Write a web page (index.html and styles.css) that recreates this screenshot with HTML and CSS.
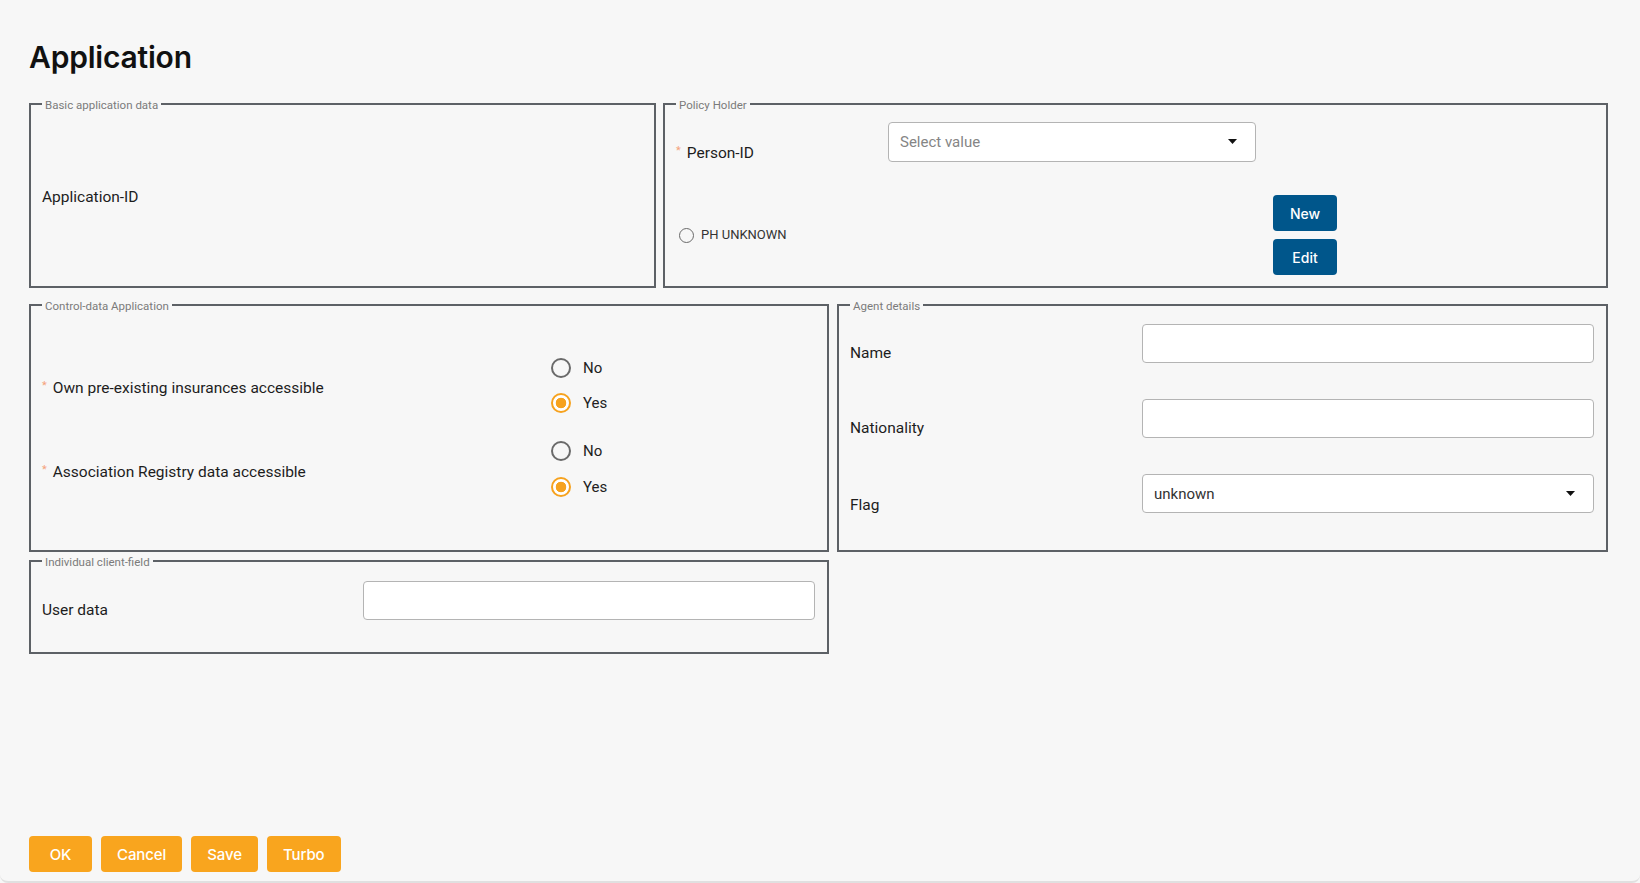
FILE: index.html
```html
<!doctype html>
<html lang="en">
<head>
    <meta charset="UTF-8">
    <meta name="viewport" content="width=device-width, initial-scale=1.0">
    <title>Application</title>
    <link rel="stylesheet" href="styles.css">
</head>
<body>
<div class="page">
    <h1 class="title">Application</h1>

    <div class="row-top">
        <fieldset class="group">
            <legend>Basic application data</legend>
            <div class="center-box">
                <span class="field-label">Application-ID</span>
            </div>
        </fieldset>

        <fieldset class="group group-holder">
            <legend>Policy Holder</legend>
            <div class="field">
                <label class="field-label req holder-label" for="personId">Person-ID</label>
                <div class="select select-short">
                    <select id="personId" class="placeholder">
                        <option>Select value</option>
                    </select>
                    <svg class="caret" width="9" height="5" viewBox="0 0 9 5"><path d="M0 0h9L4.5 5z" fill="#111"/></svg>
                </div>
            </div>
            <div class="holder-row">
                <label class="radio radio-small"><input type="radio" name="ph"> PH UNKNOWN</label>
                <div class="btn-stack">
                    <button class="btn btn-blue">New</button>
                    <button class="btn btn-blue">Edit</button>
                </div>
            </div>
        </fieldset>
    </div>

    <div class="row-main">
        <fieldset class="group group-control">
            <legend>Control-data Application</legend>
            <div class="choice-list">
                <div class="choice">
                    <span class="field-label req choice-label">Own pre-existing insurances accessible</span>
                    <div class="radio-group">
                        <label class="radio"><input type="radio" name="own"> No</label>
                        <label class="radio"><input type="radio" name="own" checked> Yes</label>
                    </div>
                </div>
                <div class="choice">
                    <span class="field-label req choice-label">Association Registry data accessible</span>
                    <div class="radio-group">
                        <label class="radio"><input type="radio" name="assoc"> No</label>
                        <label class="radio"><input type="radio" name="assoc" checked> Yes</label>
                    </div>
                </div>
            </div>
        </fieldset>

        <fieldset class="group group-agent">
            <legend>Agent details</legend>
            <div class="field">
                <label class="field-label agent-label" for="agentName">Name</label>
                <input type="text" id="agentName" class="text-input">
            </div>
            <div class="field">
                <label class="field-label agent-label" for="agentNat">Nationality</label>
                <input type="text" id="agentNat" class="text-input">
            </div>
            <div class="field">
                <label class="field-label agent-label flag-label" for="agentFlag">Flag</label>
                <div class="select select-wide">
                    <select id="agentFlag">
                        <option>unknown</option>
                    </select>
                    <svg class="caret" width="9" height="5" viewBox="0 0 9 5"><path d="M0 0h9L4.5 5z" fill="#111"/></svg>
                </div>
            </div>
        </fieldset>

        <fieldset class="group group-client">
            <legend>Individual client-field</legend>
            <div class="field">
                <label class="field-label client-label" for="userData">User data</label>
                <input type="text" id="userData" class="text-input">
            </div>
        </fieldset>
    </div>

    <div class="actions">
        <button class="btn btn-orange">OK</button>
        <button class="btn btn-orange">Cancel</button>
        <button class="btn btn-orange">Save</button>
        <button class="btn btn-orange">Turbo</button>
    </div>
</div>
</body>
</html>
```
FILE: styles.css
```css
*{
    box-sizing: border-box;
}
body{
    margin: 0;
    background: #f7f7f7;
    font-family: Roboto, "Liberation Sans", sans-serif;
    color: #1d1d1d;
}
.page{
    min-height: 100vh;
    display: flex;
    flex-direction: column;
    padding: 38px 32px 9px 29px;
    border-bottom: 2px solid #e0e0e0;
    border-radius: 0 0 8px 8px;
}
.title{
    margin: 0 0 20px;
    font-family: Inter, "Open Sans", sans-serif;
    font-size: 30px;
    line-height: 38px;
    font-weight: 600;
    color: #111;
    letter-spacing: -0.2px;
}

/* boxes */
.row-top{
    display: grid;
    grid-template-columns: 627px 1fr;
    column-gap: 7px;
}
.row-main{
    display: grid;
    grid-template-columns: 800px 1fr;
    column-gap: 8px;
    row-gap: 1px;
    margin-top: 9px;
}
.group{
    margin: 0;
    min-width: 0;
    border: 2px solid #5d6166;
    padding: 10px 12px 11px 11px;
    display: flex;
    flex-direction: column;
}
.group legend{
    font-size: 11.5px;
    line-height: 12px;
    color: #7b7b7b;
    padding: 3px 3px 0;
}
.group-holder{
    padding-top: 11px;
}
.group-control{
    padding-bottom: 18px;
}
.group-agent{
    padding: 12px 12px 36px 11px;
}
.group-client{
    padding: 13px 12px 32px 11px;
}
.center-box{
    flex: 1;
    display: flex;
    align-items: center;
    padding-bottom: 2px;
}

/* fields */
.field-label{
    font-size: 15.5px;
    line-height: 18px;
    color: #1d1d1d;
}
.req::before{
    content: "*";
    color: #f5a27c;
    font-size: 11px;
    vertical-align: top;
    margin-right: 6px;
    position: relative;
    top: -2px;
}
.field{
    display: flex;
    align-items: flex-start;
}
.group-agent .field + .field{
    margin-top: 36px;
}
.holder-label{
    width: 212px;
    padding-top: 22px;
}
.agent-label{
    width: 292px;
    flex-shrink: 0;
    padding-top: 20px;
}
.flag-label{
    padding-top: 22px;
}
.client-label{
    width: 321px;
    flex-shrink: 0;
    padding-top: 20px;
}
.text-input{
    flex: 1;
    height: 39px;
    border: 1px solid #b4b4b4;
    border-radius: 4px;
    background: #fff;
    padding: 0 11px;
    font: inherit;
    font-size: 15px;
}
.select{
    position: relative;
    height: 39px;
}
.select select{
    appearance: none;
    width: 100%;
    height: 100%;
    border: 1px solid #b4b4b4;
    border-radius: 4px;
    background: #fff;
    padding: 0 30px 0 11px;
    font-family: inherit;
    font-size: 15px;
    color: #333;
}
.select select.placeholder{
    color: #858585;
}
.select-short{
    width: 368px;
    height: 40px;
}
.select-wide{
    flex: 1;
}
.caret{
    position: absolute;
    right: 19px;
    top: 17px;
    pointer-events: none;
}

/* policy holder */
.holder-row{
    display: flex;
    align-items: center;
    margin-top: 33px;
}
.holder-row .radio{
    width: 597px;
}
.btn-stack{
    display: flex;
    flex-direction: column;
    gap: 8px;
}

/* radios */
.radio{
    display: flex;
    align-items: center;
    gap: 12px;
    font-size: 15px;
    line-height: 20px;
    color: #222;
}
.radio input{
    appearance: none;
    margin: 0;
    width: 20px;
    height: 20px;
    border: 2px solid #6a6a6a;
    border-radius: 50%;
    background: transparent;
}
.radio input:checked{
    border-color: #f6a21e;
    background: radial-gradient(circle, #f6a21e 0 5px, #fff 5.6px);
}
.radio-small{
    gap: 7px;
    font-size: 13px;
    color: #333;
    padding-left: 3px;
}
.radio-small input{
    width: 15px;
    height: 15px;
    border-width: 1.5px;
}

/* control data */
.choice-list{
    flex: 1;
    display: flex;
    flex-direction: column;
    justify-content: center;
    gap: 28px;
}
.choice{
    display: flex;
    align-items: center;
}
.choice-label{
    width: 509px;
    padding-top: 6px;
}
.radio-group{
    display: flex;
    flex-direction: column;
    gap: 15.5px;
}

/* buttons */
.btn{
    border: none;
    border-radius: 4px;
    color: #fff;
    font-family: Inter, "Open Sans", sans-serif;
    font-weight: 500;
    cursor: pointer;
}
.btn-blue{
    width: 64px;
    height: 36px;
    background: #00568b;
    font-size: 14px;
}
.actions{
    margin-top: auto;
    display: flex;
    gap: 9px;
}
.btn-orange{
    min-width: 63px;
    height: 36px;
    padding: 0 16px;
    background: #f9a51e;
    font-size: 15px;
    letter-spacing: -0.1px;
}
```
